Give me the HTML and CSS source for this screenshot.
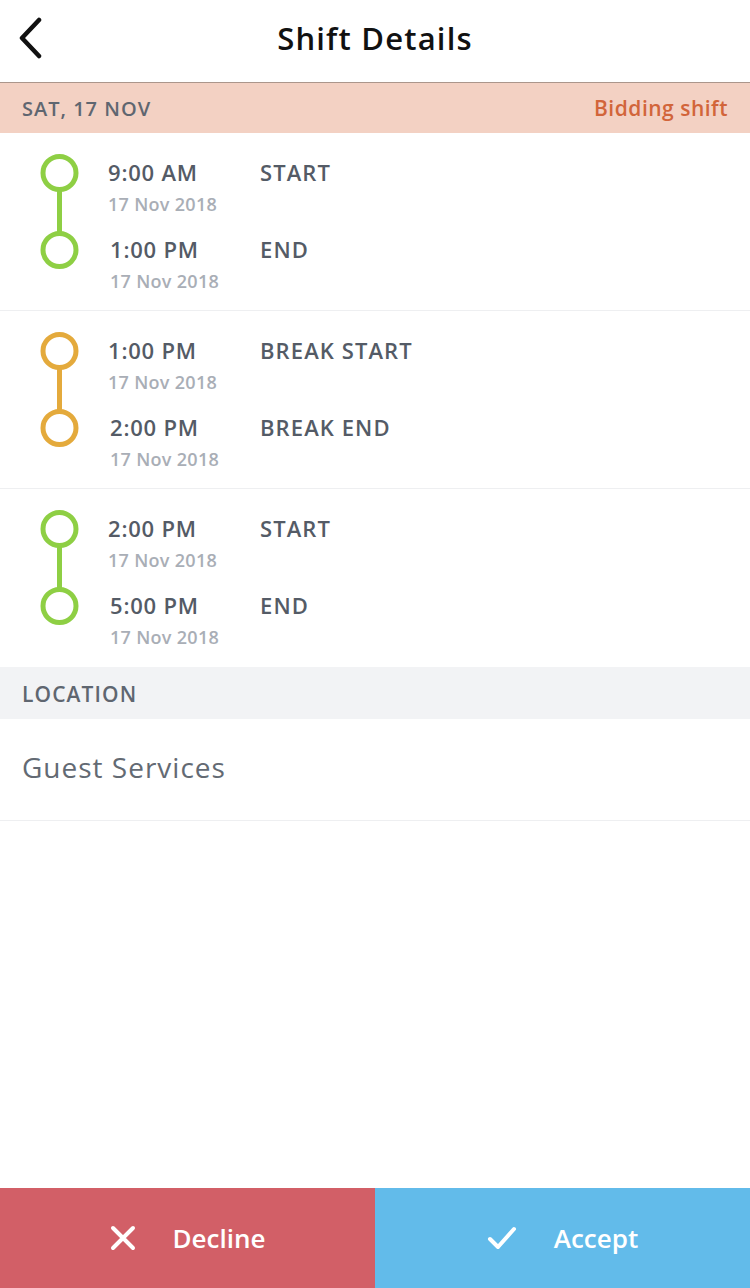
FILE: index.html
```html
<!DOCTYPE html>
<html lang="en">
<head>
    <meta charset="UTF-8">
    <meta name="viewport" content="width=device-width, initial-scale=1.0">
    <title>Shift Details</title>
    <link rel="stylesheet" href="styles.css">
</head>
<body>
    <div class="screen">
        <div class="header">
            <svg class="back" width="26" height="42" viewBox="0 0 26 42"><path d="M22 3 L5 21 L22 39" fill="none" stroke="#111" stroke-width="4.5" stroke-linecap="round" stroke-linejoin="round"/></svg>
            <h1>Shift Details</h1>
        </div>

        <div class="date-bar">
            <span>SAT, 17 NOV</span>
            <span class="bidding">Bidding shift</span>
        </div>

        <div class="block">
            <svg class="timeline" width="40" height="116" viewBox="0 0 40 116"><line x1="19.5" y1="36" x2="19.5" y2="80" stroke="#8ecf44" stroke-width="5"/><circle cx="19.5" cy="19" r="16.5" fill="none" stroke="#8ecf44" stroke-width="5"/><circle cx="19.5" cy="96" r="16.5" fill="none" stroke="#8ecf44" stroke-width="5"/></svg>
            <div class="rows">
                <div class="row">
                    <div class="when"><div class="time">9:00 AM</div><div class="date">17 Nov 2018</div></div>
                    <div class="label">START</div>
                </div>
                <div class="row end">
                    <div class="when"><div class="time">1:00 PM</div><div class="date">17 Nov 2018</div></div>
                    <div class="label">END</div>
                </div>
            </div>
        </div>

        <div class="block">
            <svg class="timeline" width="40" height="116" viewBox="0 0 40 116"><line x1="19.5" y1="36" x2="19.5" y2="80" stroke="#e4aa3c" stroke-width="5"/><circle cx="19.5" cy="19" r="16.5" fill="none" stroke="#e4aa3c" stroke-width="5"/><circle cx="19.5" cy="96" r="16.5" fill="none" stroke="#e4aa3c" stroke-width="5"/></svg>
            <div class="rows">
                <div class="row">
                    <div class="when"><div class="time">1:00 PM</div><div class="date">17 Nov 2018</div></div>
                    <div class="label">BREAK START</div>
                </div>
                <div class="row end">
                    <div class="when"><div class="time">2:00 PM</div><div class="date">17 Nov 2018</div></div>
                    <div class="label">BREAK END</div>
                </div>
            </div>
        </div>

        <div class="block last">
            <svg class="timeline" width="40" height="116" viewBox="0 0 40 116"><line x1="19.5" y1="36" x2="19.5" y2="80" stroke="#8ecf44" stroke-width="5"/><circle cx="19.5" cy="19" r="16.5" fill="none" stroke="#8ecf44" stroke-width="5"/><circle cx="19.5" cy="96" r="16.5" fill="none" stroke="#8ecf44" stroke-width="5"/></svg>
            <div class="rows">
                <div class="row">
                    <div class="when"><div class="time">2:00 PM</div><div class="date">17 Nov 2018</div></div>
                    <div class="label">START</div>
                </div>
                <div class="row end">
                    <div class="when"><div class="time">5:00 PM</div><div class="date">17 Nov 2018</div></div>
                    <div class="label">END</div>
                </div>
            </div>
        </div>

        <div class="section-head">LOCATION</div>
        <div class="location">Guest Services</div>

        <div class="actions">
            <button class="action decline">
                <svg width="26" height="26" viewBox="0 0 26 26"><path d="M3 3 L23 23 M23 3 L3 23" stroke="#fff" stroke-width="4" stroke-linecap="round"/></svg>
                Decline
            </button>
            <button class="action accept">
                <svg width="30" height="26" viewBox="0 0 30 26"><path d="M3 14 L11 22 L27 4" fill="none" stroke="#fff" stroke-width="4" stroke-linecap="round" stroke-linejoin="round"/></svg>
                Accept
            </button>
        </div>
    </div>
</body>
</html>
```

FILE: styles.css
```css
* { margin: 0; padding: 0; box-sizing: border-box; }
body { font-family: 'Open Sans', Lato, sans-serif; background: #fff; }
.screen { width: 750px; height: 1288px; display: flex; flex-direction: column; }

.header { height: 83px; border-bottom: 1px solid #ab968b; display: flex; align-items: center; justify-content: center; position: relative; padding-bottom: 6px; }
.header h1 { font-size: 31px; font-weight: 600; color: #111; letter-spacing: 1.2px; }
.back { position: absolute; left: 17px; top: 17px; }

.date-bar { height: 50px; background: #f3d1c3; display: flex; align-items: center; justify-content: space-between; padding: 0 22px; font-size: 20px; font-weight: 600; color: #5f6670; letter-spacing: 1px; }
.date-bar .bidding { color: #d2653a; font-size: 21px; letter-spacing: 0.5px; }

.block { display: flex; padding: 21px 0 0 40px; height: 178px; border-bottom: 1px solid #eeeff1; }
.block.last { border-bottom: none; }
.timeline { flex: none; }
.rows { margin: 3px 0 0 28px; display: flex; flex-direction: column; gap: 20px; }
.row { display: flex; height: 57px; }
.row.end .when { padding-left: 2px; }
.when { width: 152px; }
.time { font-size: 22px; line-height: 30px; font-weight: 600; color: #545b66; letter-spacing: 0.8px; }
.date { font-size: 18px; line-height: 22px; margin-top: 6px; font-weight: 600; color: #a9aeb6; letter-spacing: 0.3px; }
.label { font-size: 22px; line-height: 30px; font-weight: 600; color: #545b66; letter-spacing: 1.1px; }

.section-head { height: 52px; background: #f2f3f5; display: flex; align-items: center; padding: 2px 22px 0; font-size: 21px; font-weight: 600; color: #5f6670; letter-spacing: 1.1px; }
.location { height: 102px; border-bottom: 1px solid #eeeff1; display: flex; align-items: center; padding: 0 22px 6px; font-size: 28px; font-weight: 400; color: #636a73; letter-spacing: 1px; }

.actions { margin-top: auto; display: flex; height: 100px; }
.action { flex: 1; border: none; display: flex; align-items: center; justify-content: center; gap: 37px; font-family: inherit; font-size: 26px; font-weight: 600; color: #fff; }
.decline { background: #d25f67; }
.accept { background: #62bbea; }
```
